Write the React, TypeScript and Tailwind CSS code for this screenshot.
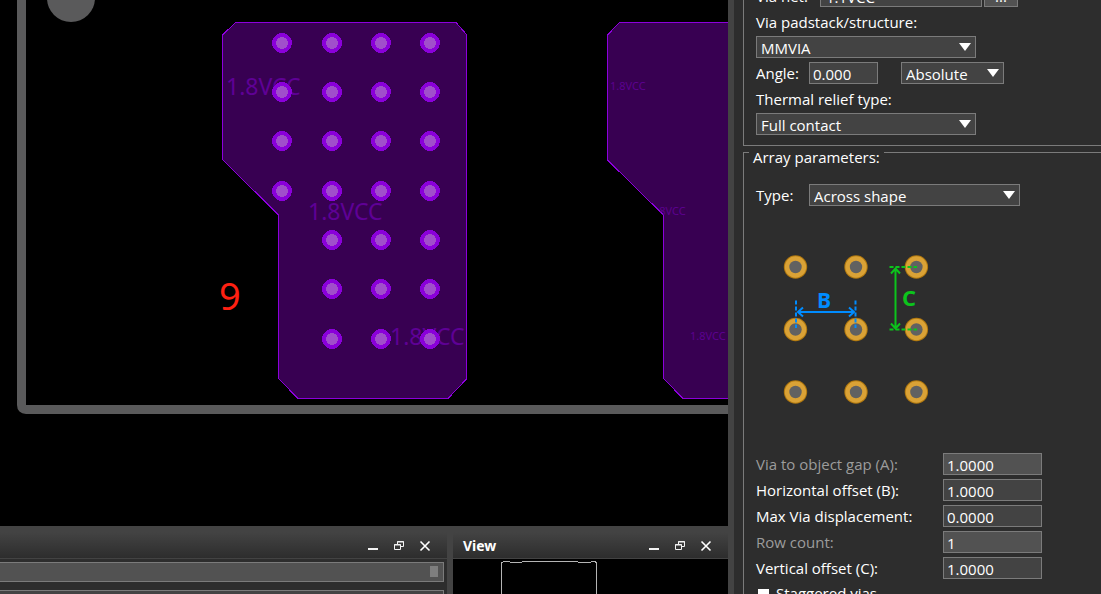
import type { ReactNode } from "react";

const leftVias = [
  ...[43, 92, 141, 191].map((y) => [282, y]),
  ...[332, 381, 430].flatMap((x) => [43, 92, 141, 191, 240, 289, 339].map((y) => [x, y])),
];

function BoardCanvas() {
  return (
    <svg className="block h-full w-full" role="img" aria-label="Board layout" fontFamily="'Noto Sans', sans-serif">
      <defs>
        <clipPath id="pour">
          <path d="M619 22H1200V398H683L663 378V215L607 160V35Z" />
        </clipPath>
      </defs>
      <path d="M21.500 -10V405Q21.500 409.500 26 409.500H3000" fill="none" stroke="#5a5a5b" strokeWidth="9" />
      <circle cx="71" cy="-2" r="24" fill="#5a5a5b" />
      <g fill="#380052" stroke="#8c00dc" shapeRendering="crispEdges">
        <path d="M235.500 22.500H456L466.500 34.500V379L448 398.500H298L278.500 378.500V215L222.500 159.500V35Z" />
        <path d="M619.500 22.500H1200V398.500H683L663.500 378.500V215L607.500 160V35Z" />
      </g>
      <g fill="#5f0096" fontSize="23">
        <text x="226" y="95">1.8VCC</text>
        <text x="308" y="220">1.8VCC</text>
        <text x="390" y="345">1.8VCC</text>
      </g>
      <g fill="#5c0090" fontSize="11" clipPath="url(#pour)">
        <text x="610" y="90">1.8VCC</text>
        <text x="650" y="215">1.8VCC</text>
        <text x="690" y="340">1.8VCC</text>
      </g>
      {leftVias.map(([x, y]) => (
        <g key={`${x}-${y}`} shapeRendering="crispEdges">
          <circle cx={x} cy={y} r="10" fill="#8a00da" />
          <circle cx={x} cy={y} r="6" fill="#a04fcb" />
        </g>
      ))}
      <text x="219" y="310" fontSize="38" fill="#ff2012">9</text>
    </svg>
  );
}

function PatternDiagram() {
  return (
    <svg className="block" width="160" height="160" viewBox="780 250 160 160" role="img" aria-label="Array spacing" fontFamily="'Open Sans', sans-serif">
      {[267, 329.5, 392].map((y) =>
        [795.5, 856, 916.4].map((x) => (
          <g key={`${x}-${y}`}>
            <circle cx={x} cy={y} r="11.700" fill="#b0780f" />
            <circle cx={x} cy={y} r="10.700" fill="#daa236" />
            <circle cx={x} cy={y} r="6.200" fill="#616161" />
          </g>
        ))
      )}
      <g stroke="#008cff" fill="none" strokeWidth="2">
        <path d="M796 300.500V328M855.500 300.500V328" strokeDasharray="4 2" />
        <path d="M797.500 312H854M803 307.500L798 312L803 316.500M849 307.500L854 312L849 316.500" />
      </g>
      <g stroke="#0cc41c" fill="none" strokeWidth="2">
        <path d="M889.500 267H917M889.500 329.500H917" strokeDasharray="4 2" />
        <path d="M895.500 268.500V328.500M891 273.500L895.500 268.500L900 273.500M891 323.500L895.500 328.500L900 323.500" />
      </g>
      <text x="817" y="308" fontSize="21" fontWeight="700" fill="#008cff">B</text>
      <text x="902" y="306" fontSize="22" fontWeight="700" fill="#0cc41c">C</text>
    </svg>
  );
}

function Select({ id, value, width, label }: { id: string; value: string; width: string; label?: string }) {
  return (
    <div className={`relative ${width}`}>
      <select
        id={id}
        aria-label={label}
        defaultValue={value}
        className="block h-[22px] w-full appearance-none border border-[#7b7b7b] bg-[#434343] pt-px pl-1 leading-5 text-white outline-none"
      >
        <option>{value}</option>
      </select>
      <svg className="pointer-events-none absolute top-[7px] right-[5px]" width="12" height="8" viewBox="0 0 12 8" aria-hidden="true">
        <path d="M0 0H12L6 8Z" fill="#fff" />
      </svg>
    </div>
  );
}

function TextBox({ id, value, width, disabled }: { id: string; value: string; width: string; disabled?: boolean }) {
  return (
    <input
      id={id}
      defaultValue={value}
      disabled={disabled}
      className={`block h-[22px] border border-[#7b7b7b] bg-[#434343] pt-px pl-[3px] leading-5 text-white outline-none disabled:bg-[#525252] ${width}`}
    />
  );
}

function ParamRow({ id, label, value, disabled }: { id: string; label: string; value: string; disabled?: boolean }) {
  return (
    <div className="flex items-center">
      <label htmlFor={id} className={`w-[187px] ${disabled ? "text-[#9c9c9c]" : ""}`}>{label}</label>
      <TextBox id={id} value={value} width="w-[99px]" disabled={disabled} />
    </div>
  );
}

function OptionsPanel() {
  return (
    <aside className="w-1/3 shrink-0 overflow-hidden bg-[#2d2d2d] pl-[9px] font-['Open_Sans',sans-serif] text-[15px] leading-[21px] text-white">
      <form className="-mt-[40px]">
        <fieldset className="flex flex-col gap-1 border border-r-0 border-[#7b7b7b] pt-6 pb-[10px] pl-3">
          <div className="flex items-center">
            <label htmlFor="net" className="w-16">Via net:</label>
            <input id="net" defaultValue="1.1VCC" className="h-[22px] w-[162px] border border-[#7b7b7b] bg-[#434343] pt-px pl-[5px] leading-5 outline-none" />
            <button type="button" aria-label="Browse nets" className="ml-0.5 h-[22px] w-[34px] border border-[#7b7b7b] bg-[#525252] leading-5">...</button>
          </div>
          <label htmlFor="padstack" className="h-[21px] leading-[23px]">Via padstack/structure:</label>
          <Select id="padstack" value="MMVIA" width="w-[220px]" />
          <div className="flex items-center">
            <label htmlFor="angle" className="w-[53px]">Angle:</label>
            <TextBox id="angle" value="0.000" width="w-[69px]" />
            <div className="ml-[23px]">
              <Select id="mode" label="Angle mode" value="Absolute" width="w-[103px]" />
            </div>
          </div>
          <label htmlFor="relief" className="h-[21px] leading-[23px]">Thermal relief type:</label>
          <Select id="relief" value="Full contact" width="w-[220px]" />
        </fieldset>

        <fieldset className="mt-1.5 border border-r-0 border-[#7b7b7b] pb-4 pl-3">
          <legend className="-ml-[7px] h-px px-1 leading-[10px]">Array parameters:</legend>
          <div className="mt-[31px] flex items-center">
            <label htmlFor="type" className="w-[53px]">Type:</label>
            <Select id="type" value="Across shape" width="w-[211px]" />
          </div>
          <div className="mt-11 mb-[43px] ml-6">
            <PatternDiagram />
          </div>
          <div className="flex flex-col gap-1">
            <ParamRow id="gap" label="Via to object gap (A):" value="1.0000" disabled />
            <ParamRow id="horizontal" label="Horizontal offset (B):" value="1.0000" />
            <ParamRow id="displacement" label="Max Via displacement:" value="0.0000" />
            <ParamRow id="rows" label="Row count:" value="1" disabled />
            <ParamRow id="vertical" label="Vertical offset (C):" value="1.0000" />
            <label className="flex items-start gap-[7px] pl-0.5">
              <input type="checkbox" className="mt-1.5 size-[11px] appearance-none bg-white" />
              Staggered vias
            </label>
          </div>
        </fieldset>
      </form>
    </aside>
  );
}

function WindowButtons() {
  const button = "flex h-4 w-[26px] items-center justify-center";
  return (
    <div className="ml-auto flex">
      <button type="button" aria-label="Minimize" className={button}>
        <svg width="12" height="12" viewBox="0 0 12 12"><path d="M1 8H11V10H1Z" fill="#f2f2f2" /></svg>
      </button>
      <button type="button" aria-label="Restore" className={button}>
        <svg width="12" height="12" viewBox="0 0 12 12" fill="none" stroke="#f2f2f2">
          <path d="M4.500 5V1.500H10.500V6.500H7.500M4 2H11M1.500 4.500H7.500V9.500H1.500ZM1 5H8" />
        </svg>
      </button>
      <button type="button" aria-label="Close" className={button}>
        <svg width="12" height="12" viewBox="0 0 12 12" stroke="#fff" strokeWidth="1.600"><path d="M1.500 1.500L10.500 10.500M10.500 1.500L1.500 10.500" /></svg>
      </button>
    </div>
  );
}

function DockPane({ title, width, children }: { title?: string; width: string; children: ReactNode }) {
  return (
    <section className={`flex flex-col ${width}`}>
      <header className="flex h-[33px] shrink-0 items-center border-b border-[#434343] bg-linear-to-b from-[#434343] from-20% to-[#2d2d2d] pt-[7px] pr-[9px] pl-[10px]">
        {title && <h2 className="text-[14px] leading-5 font-bold text-white">{title}</h2>}
        <WindowButtons />
      </header>
      {children}
    </section>
  );
}

export default function App() {
  return (
    <main className="flex h-screen overflow-hidden bg-[#434343] font-['Noto_Sans',sans-serif]">
      <div className="flex min-w-0 flex-1 flex-col">
        <div className="min-h-0 flex-1 bg-black">
          <BoardCanvas />
        </div>
        <div className="flex h-[68px] shrink-0 gap-1.5">
          <DockPane width="min-w-0 flex-1">
            <div className="flex flex-1 flex-col gap-2 overflow-hidden bg-[#2d2d2d] pt-[3px] pr-[3px]">
              <div className="flex h-5 shrink-0 justify-end border border-l-0 border-[#7b7b7b] bg-[#525252] pt-[3px] pr-[5px]">
                <span className="h-[11px] w-2 bg-[#7e7e7e]" />
              </div>
              <div className="h-5 shrink-0 border border-l-0 border-[#7b7b7b] bg-[#434343]" />
            </div>
          </DockPane>
          <DockPane title="View" width="w-[275px] shrink-0">
            <div className="flex-1 overflow-hidden bg-black">
              <svg className="ml-12 block" width="98" height="36" fill="none" stroke="#b4b4b4" shapeRendering="crispEdges" aria-hidden="true">
                <path d="M0.500 36V4L2.500 2.500H8L9.500 3.500H20.500L22 2.500H76L78 3.500H89L91 2.500H94L95.500 4V36" />
              </svg>
            </div>
          </DockPane>
        </div>
      </div>
      <div className="w-1.5 shrink-0" />
      <OptionsPanel />
    </main>
  );
}
